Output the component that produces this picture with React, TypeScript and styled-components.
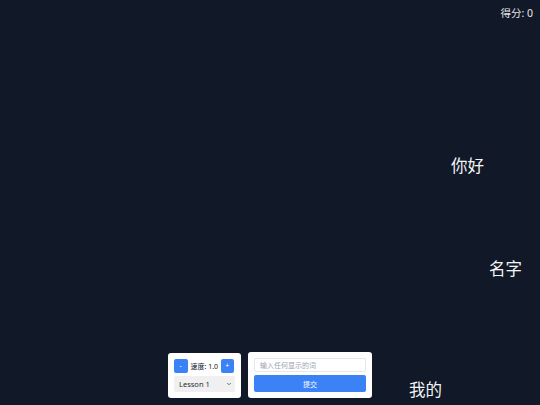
import { useState } from "react";
import styled, { createGlobalStyle } from "styled-components";
import { ChevronDown } from "lucide-react";

const GlobalStyle = createGlobalStyle`
  html, body {
    margin: 0;
    padding: 0;
    background: #111827;
  }
  * {
    box-sizing: border-box;
  }
`;

const FONT = `"Noto Sans", "Noto Sans CJK SC", sans-serif`;

const Screen = styled.div`
  position: relative;
  height: 100vh;
  overflow: hidden;
  background: #111827;
  font-family: ${FONT};
  display: flex;
  flex-direction: column;
  justify-content: flex-end;
  align-items: center;
  padding-bottom: 7px;
`;

const Score = styled.div`
  position: absolute;
  top: 6px;
  right: 7px;
  color: #e5e7eb;
  font-size: 10.5px;
  line-height: 15px;
`;

const Word = styled.div<{ $x: number; $y: number }>`
  position: absolute;
  left: ${(p) => p.$x}px;
  top: ${(p) => p.$y}px;
  color: #f3f4f6;
  font-size: 16.5px;
  line-height: 22px;
  white-space: nowrap;
`;

const ControlBar = styled.div`
  display: flex;
  align-items: flex-end;
  gap: 7px;
  position: relative;
  z-index: 1;
`;

const Panel = styled.div`
  background: #ffffff;
  border-radius: 3px;
  padding: 6px;
  display: flex;
  flex-direction: column;
  gap: 3px;
`;

const SpeedRow = styled.div`
  display: flex;
  align-items: center;
  gap: 3px;
  height: 14px;
`;

const SmallButton = styled.button`
  width: 13.5px;
  height: 14px;
  padding: 0;
  border: none;
  border-radius: 2px;
  background: #3b82f6;
  color: #ffffff;
  font-family: ${FONT};
  font-size: 7px;
  line-height: 14px;
`;

const SpeedLabel = styled.span`
  font-size: 7px;
  color: #111827;
  width: 27px;
  text-align: center;
  white-space: nowrap;
`;

const SelectWrap = styled.div`
  position: relative;
  width: 61px;
  height: 16px;
`;

const Select = styled.select`
  display: block;
  appearance: none;
  width: 100%;
  height: 16px;
  line-height: 16px;
  border: none;
  border-radius: 2px;
  background: #f0f0f0;
  color: #1f2937;
  font-family: ${FONT};
  font-size: 7.5px;
  padding: 0 0 0 5px;
  margin: 0;
  outline: none;
`;

const Arrow = styled(ChevronDown)`
  display: block;
  position: absolute;
  right: 3px;
  top: 5px;
  pointer-events: none;
  color: #374151;
`;

const Input = styled.input`
  display: block;
  width: 112px;
  height: 14px;
  border: 1px solid #e5e7eb;
  border-radius: 2px;
  padding: 0 5px;
  margin: 0;
  font-family: ${FONT};
  font-size: 7px;
  color: #111827;
  outline: none;
  &::placeholder {
    color: #9ca3af;
  }
`;

const SubmitButton = styled.button`
  display: block;
  width: 112px;
  height: 17px;
  border: none;
  border-radius: 2px;
  background: #3b82f6;
  color: #ffffff;
  font-family: ${FONT};
  font-size: 7px;
  padding: 0;
  margin: 0;
`;

const words = [
  { text: "你好", x: 451, y: 155 },
  { text: "名字", x: 489, y: 258 },
  { text: "我的", x: 409, y: 379 },
];

export default function App() {
  const [speed, setSpeed] = useState(1.0);
  const [score] = useState(0);
  const [input, setInput] = useState("");

  return (
    <>
      <GlobalStyle />
      <Screen>
        <Score>得分: {score}</Score>
        {words.map((w) => (
          <Word key={w.text} $x={w.x} $y={w.y}>
            {w.text}
          </Word>
        ))}
        <ControlBar>
          <Panel>
            <SpeedRow>
              <SmallButton onClick={() => setSpeed((s) => Math.max(0.1, s - 0.1))}>-</SmallButton>
              <SpeedLabel>速度: {speed.toFixed(1)}</SpeedLabel>
              <SmallButton onClick={() => setSpeed((s) => s + 0.1)}>+</SmallButton>
            </SpeedRow>
            <SelectWrap>
              <Select defaultValue="1">
                <option value="1">Lesson 1</option>
                <option value="2">Lesson 2</option>
              </Select>
              <Arrow size={6} strokeWidth={3} />
            </SelectWrap>
          </Panel>
          <Panel>
            <Input
              placeholder="输入任何显示的词"
              value={input}
              onChange={(e) => setInput(e.target.value)}
            />
            <SubmitButton>提交</SubmitButton>
          </Panel>
        </ControlBar>
      </Screen>
    </>
  );
}
